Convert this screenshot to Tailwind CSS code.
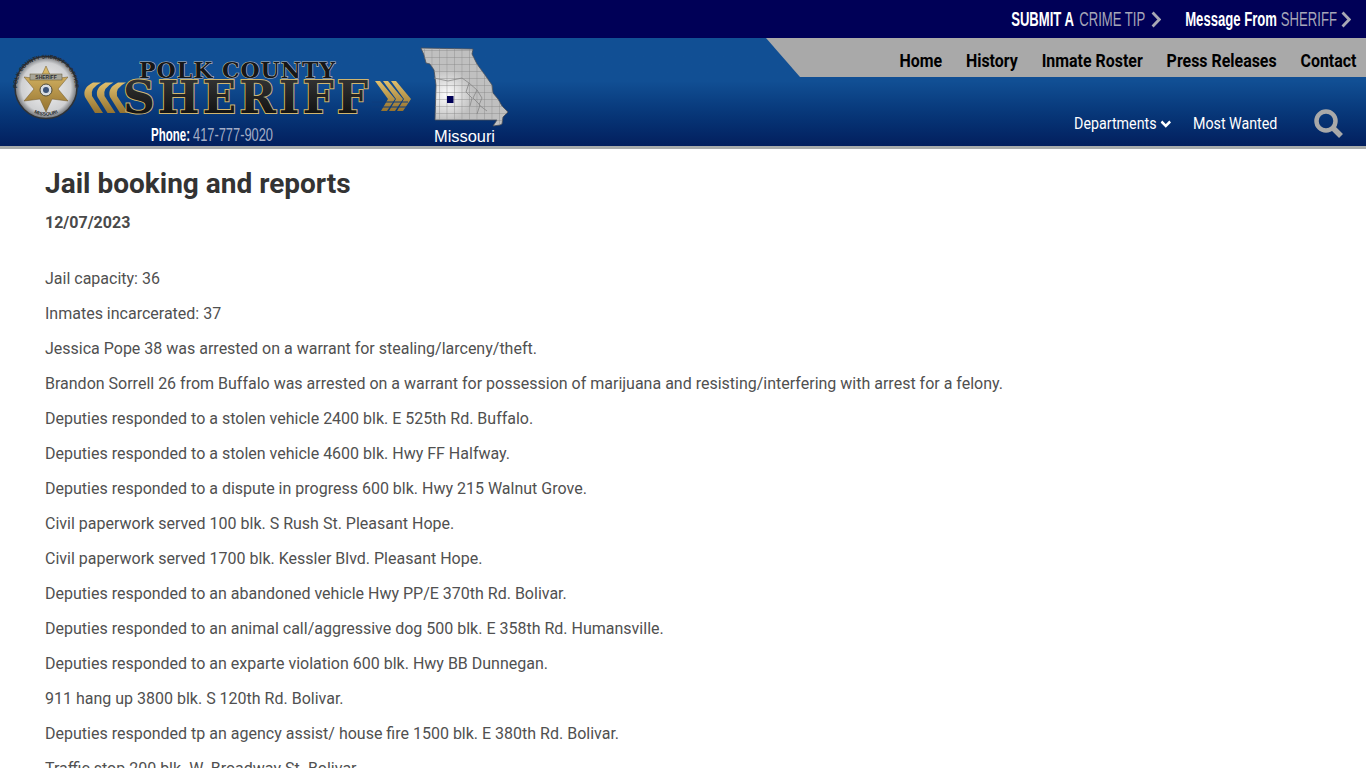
<!DOCTYPE html>
<html lang="en">
<head>
    <meta charset="UTF-8">
    <meta name="viewport" content="width=device-width, initial-scale=1.0">
    <title>Jail booking and reports</title>
    <script src="https://cdn.jsdelivr.net/npm/@tailwindcss/browser@4"></script>
</head>
<body class="bg-white font-['Roboto',sans-serif] h-screen overflow-hidden">

    <!-- Top links -->
    <div class="h-[38px] bg-[#000057] flex justify-end items-center pr-[15px]">
        <div class="flex items-center gap-[37px] origin-right scale-x-[0.655] whitespace-nowrap font-['Liberation_Sans',sans-serif] text-[20px] font-bold">
            <a class="flex items-center gap-[8px] text-white">SUBMIT A <span class="text-[#a6a6b8] font-normal">CRIME TIP</span>
                <svg class="w-[16px] h-[17px]" viewBox="0 0 11 17" preserveAspectRatio="none" fill="none" stroke="#a8a8b4" stroke-width="3"><path d="M2 1.500l7 7-7 7"/></svg>
            </a>
            <a class="flex items-center gap-[6px] text-white">Message From <span class="text-[#a6a6b8] font-normal">SHERIFF</span>
                <svg class="w-[16px] h-[17px]" viewBox="0 0 11 17" preserveAspectRatio="none" fill="none" stroke="#a8a8b4" stroke-width="3"><path d="M2 1.500l7 7-7 7"/></svg>
            </a>
        </div>
    </div>

    <!-- Header -->
    <header class="h-[111px] flex justify-between border-b-[3px] border-[#a9acab] bg-linear-to-b from-[#114f94] from-40% to-[#031f5e]">
        <svg class="w-[530px] h-[108px] shrink-0" viewBox="0 38 530 108">
            <defs>
                <linearGradient id="gold" x1="0" y1="0" x2="0" y2="1">
                    <stop offset="0" stop-color="#e0bf6c"/>
                    <stop offset="1" stop-color="#94722f"/>
                </linearGradient>
                <linearGradient id="dark" x1="0" y1="0" x2="0" y2="1">
                    <stop offset="0" stop-color="#3a3a3a"/>
                    <stop offset="1" stop-color="#0a0a0a"/>
                </linearGradient>
                <radialGradient id="seal" cx="0.5" cy="0.5" r="0.5">
                    <stop offset="0" stop-color="#f4f4f4"/>
                    <stop offset="0.8" stop-color="#cfd0d2"/>
                    <stop offset="1" stop-color="#6f7276"/>
                </radialGradient>
                <radialGradient id="mapfill" gradientUnits="userSpaceOnUse" cx="447" cy="95" r="26">
                    <stop offset="0" stop-color="#ffffff"/>
                    <stop offset="1" stop-color="#c0c0c0"/>
                </radialGradient>
                <pattern id="counties" patternUnits="userSpaceOnUse" width="7.500" height="7" x="424" y="50">
                    <path d="M7.500 0H0V7" fill="none" stroke="#858585" stroke-width="0.800"/>
                </pattern>
                <path id="ringtop" d="M18 95a29 29 0 1 1 56 0"/>
                <path id="ringbot" d="M24 105a28 28 0 0 0 44 0"/>
                <path id="chevl" d="M93 82.500h8Q90 88 92 96l11 17h-8L85 97Q82 88 93 82.500Z"/>
                <path id="chevr" d="M375 81h5l15 18-8 12h-6l7-12Z"/>
            </defs>

            <!-- Badge -->
            <circle cx="46" cy="87.500" r="31" fill="url(#seal)" stroke="#2f3236" stroke-width="1.500"/>
            <text font-family="Liberation Sans" font-weight="700" font-size="5.500" fill="#26282c"><textPath href="#ringtop" startOffset="50%" text-anchor="middle">POLK COUNTY SHERIFF'S OFFICE</textPath></text>
            <text font-family="Liberation Sans" font-weight="700" font-size="5" fill="#26282c"><textPath href="#ringbot" startOffset="50%" text-anchor="middle">MISSOURI</textPath></text>
            <path d="M46 66l6 13 16-2-10 12 10 12-16-2-6 13-6-13-16 2 10-12-10-12 16 2Z" fill="url(#gold)" stroke="#6c5526" stroke-width="0.500"/>
            <rect x="30" y="74" width="32" height="6" fill="#a8a69a" stroke="#5c5028" stroke-width="0.500"/>
            <text x="46" y="79" text-anchor="middle" font-family="Liberation Sans" font-weight="700" font-size="5" fill="#2b2b2b">SHERIFF</text>
            <circle cx="46" cy="90" r="6" fill="#d9dde2" stroke="#4f4a36"/>
            <circle cx="46" cy="90" r="3" fill="#3d5478"/>

            <!-- Wordmark -->
            <use href="#chevl" fill="url(#gold)"/>
            <use href="#chevl" x="12.500" fill="url(#gold)"/>
            <use href="#chevl" x="25" fill="url(#gold)"/>
            <text x="139" y="78" textLength="197" lengthAdjust="spacingAndGlyphs" letter-spacing="1" font-family="DejaVu Serif" font-weight="700" font-size="22" fill="#161616" stroke="#b9b9b9" stroke-width="1.200" paint-order="stroke">POLK COUNTY</text>
            <text x="123" y="112.500" textLength="248" lengthAdjust="spacingAndGlyphs" letter-spacing="3" font-family="DejaVu Serif" font-weight="700" font-size="45" fill="url(#dark)" stroke="#d0b56e" stroke-width="2" paint-order="stroke">SHERIFF</text>
            <use href="#chevr" fill="url(#gold)"/>
            <use href="#chevr" x="8" fill="url(#gold)"/>
            <use href="#chevr" x="16" fill="url(#gold)"/>
            <path d="M372 102h36M372 107h36" stroke="#0f3d7d"/>
            <text x="151" y="141" textLength="39" lengthAdjust="spacingAndGlyphs" font-family="Liberation Sans" font-weight="700" font-size="18" fill="#ffffff">Phone:</text>
            <text x="193" y="141" textLength="80" lengthAdjust="spacingAndGlyphs" font-family="Liberation Sans" font-size="18" fill="#a3aec6">417-777-9020</text>

            <!-- Missouri map -->
            <path d="M421 48l52 1-1 5 5 10 8 11 7 10 1 8 5 6 4 7 6 6-5 5-1 7-2 1-7 1 4-6-62 0 1-35-2-15-4-6-4-1-2-8Z" fill="url(#mapfill)" stroke="#4a4f58" stroke-width="0.800"/>
            <path d="M421 48l52 1-1 5 5 10 8 11 7 10 1 8 5 6 4 7 6 6-5 5-1 7-2 1-7 1 4-6-62 0 1-35-2-15-4-6-4-1-2-8Z" fill="url(#counties)"/>
            <path d="M434 78l14 3 14-3 7 5 8 7 5 8M469 83l-3 9 6 6-2 8M477 90l-4 8 7 7-3 9M482 98l-3 7 8 6" fill="none" stroke="#858585" stroke-width="0.800"/>
            <rect x="447" y="96" width="6.500" height="7" fill="#000057"/>
            <text x="434" y="142" textLength="61" lengthAdjust="spacingAndGlyphs" font-family="Liberation Sans" font-size="16" fill="#ffffff">Missouri</text>
        </svg>

        <div class="w-[600px] flex flex-col">
            <!-- Main nav -->
            <nav class="h-[39px] bg-[#a9a9a9] [clip-path:polygon(0_0,100%_0,100%_100%,34px_100%)] flex justify-end items-center pr-[10px] pt-[5px]">
                <div class="flex gap-[27px] origin-right scale-x-[0.885] whitespace-nowrap font-bold text-[18px] text-black">
                    <a>Home</a>
                    <a>History</a>
                    <a>Inmate Roster</a>
                    <a>Press Releases</a>
                    <a>Contact</a>
                </div>
            </nav>
            <!-- Secondary nav -->
            <div class="flex-1 flex justify-end items-center pr-[23px] pt-[24px] text-white">
                <div class="flex items-center origin-right scale-x-[0.89] whitespace-nowrap text-[16px] mr-[37px]">
                    <a class="flex items-center gap-1">Departments
                        <svg class="w-[12px] h-[8px]" viewBox="0 0 11 8" preserveAspectRatio="none" fill="none" stroke="#fff" stroke-width="2.500"><path d="M1 1.500l4.500 4.500L10 1.500"/></svg>
                    </a>
                    <a class="ml-[25px]">Most Wanted</a>
                </div>
                <svg class="w-[29px] h-[29px]" viewBox="0 0 29 29" fill="none" stroke="#a9a9a9"><circle cx="12" cy="12" r="9.500" stroke-width="4.500"/><path d="M19 19l8 8" stroke-width="5.500"/></svg>
            </div>
        </div>
    </header>

    <!-- Article -->
    <main class="px-[45px] pt-[18px] text-[16px] leading-[24px] text-[#505050]">
        <h1 class="text-[28px] leading-[34px] font-bold text-[#333]">Jail booking and reports</h1>
        <p class="mt-[10px] mb-[32px] font-bold text-[#4a4a4a]">12/07/2023</p>
        <p class="mb-[11px]">Jail capacity: 36</p>
        <p class="mb-[11px]">Inmates incarcerated: 37</p>
        <p class="mb-[11px]">Jessica Pope 38 was arrested on a warrant for stealing/larceny/theft.</p>
        <p class="mb-[11px]">Brandon Sorrell 26 from Buffalo was arrested on a warrant for possession of marijuana and resisting/interfering with arrest for a felony.</p>
        <p class="mb-[11px]">Deputies responded to a stolen vehicle 2400 blk. E 525th Rd. Buffalo.</p>
        <p class="mb-[11px]">Deputies responded to a stolen vehicle 4600 blk. Hwy FF Halfway.</p>
        <p class="mb-[11px]">Deputies responded to a dispute in progress 600 blk. Hwy 215 Walnut Grove.</p>
        <p class="mb-[11px]">Civil paperwork served 100 blk. S Rush St. Pleasant Hope.</p>
        <p class="mb-[11px]">Civil paperwork served 1700 blk. Kessler Blvd. Pleasant Hope.</p>
        <p class="mb-[11px]">Deputies responded to an abandoned vehicle Hwy PP/E 370th Rd. Bolivar.</p>
        <p class="mb-[11px]">Deputies responded to an animal call/aggressive dog 500 blk. E 358th Rd. Humansville.</p>
        <p class="mb-[11px]">Deputies responded to an exparte violation 600 blk. Hwy BB Dunnegan.</p>
        <p class="mb-[11px]">911 hang up 3800 blk. S 120th Rd. Bolivar.</p>
        <p class="mb-[11px]">Deputies responded tp an agency assist/ house fire 1500 blk. E 380th Rd. Bolivar.</p>
        <p class="mb-[11px]">Traffic stop 200 blk. W. Broadway St. Bolivar.</p>
    </main>

</body>
</html>
